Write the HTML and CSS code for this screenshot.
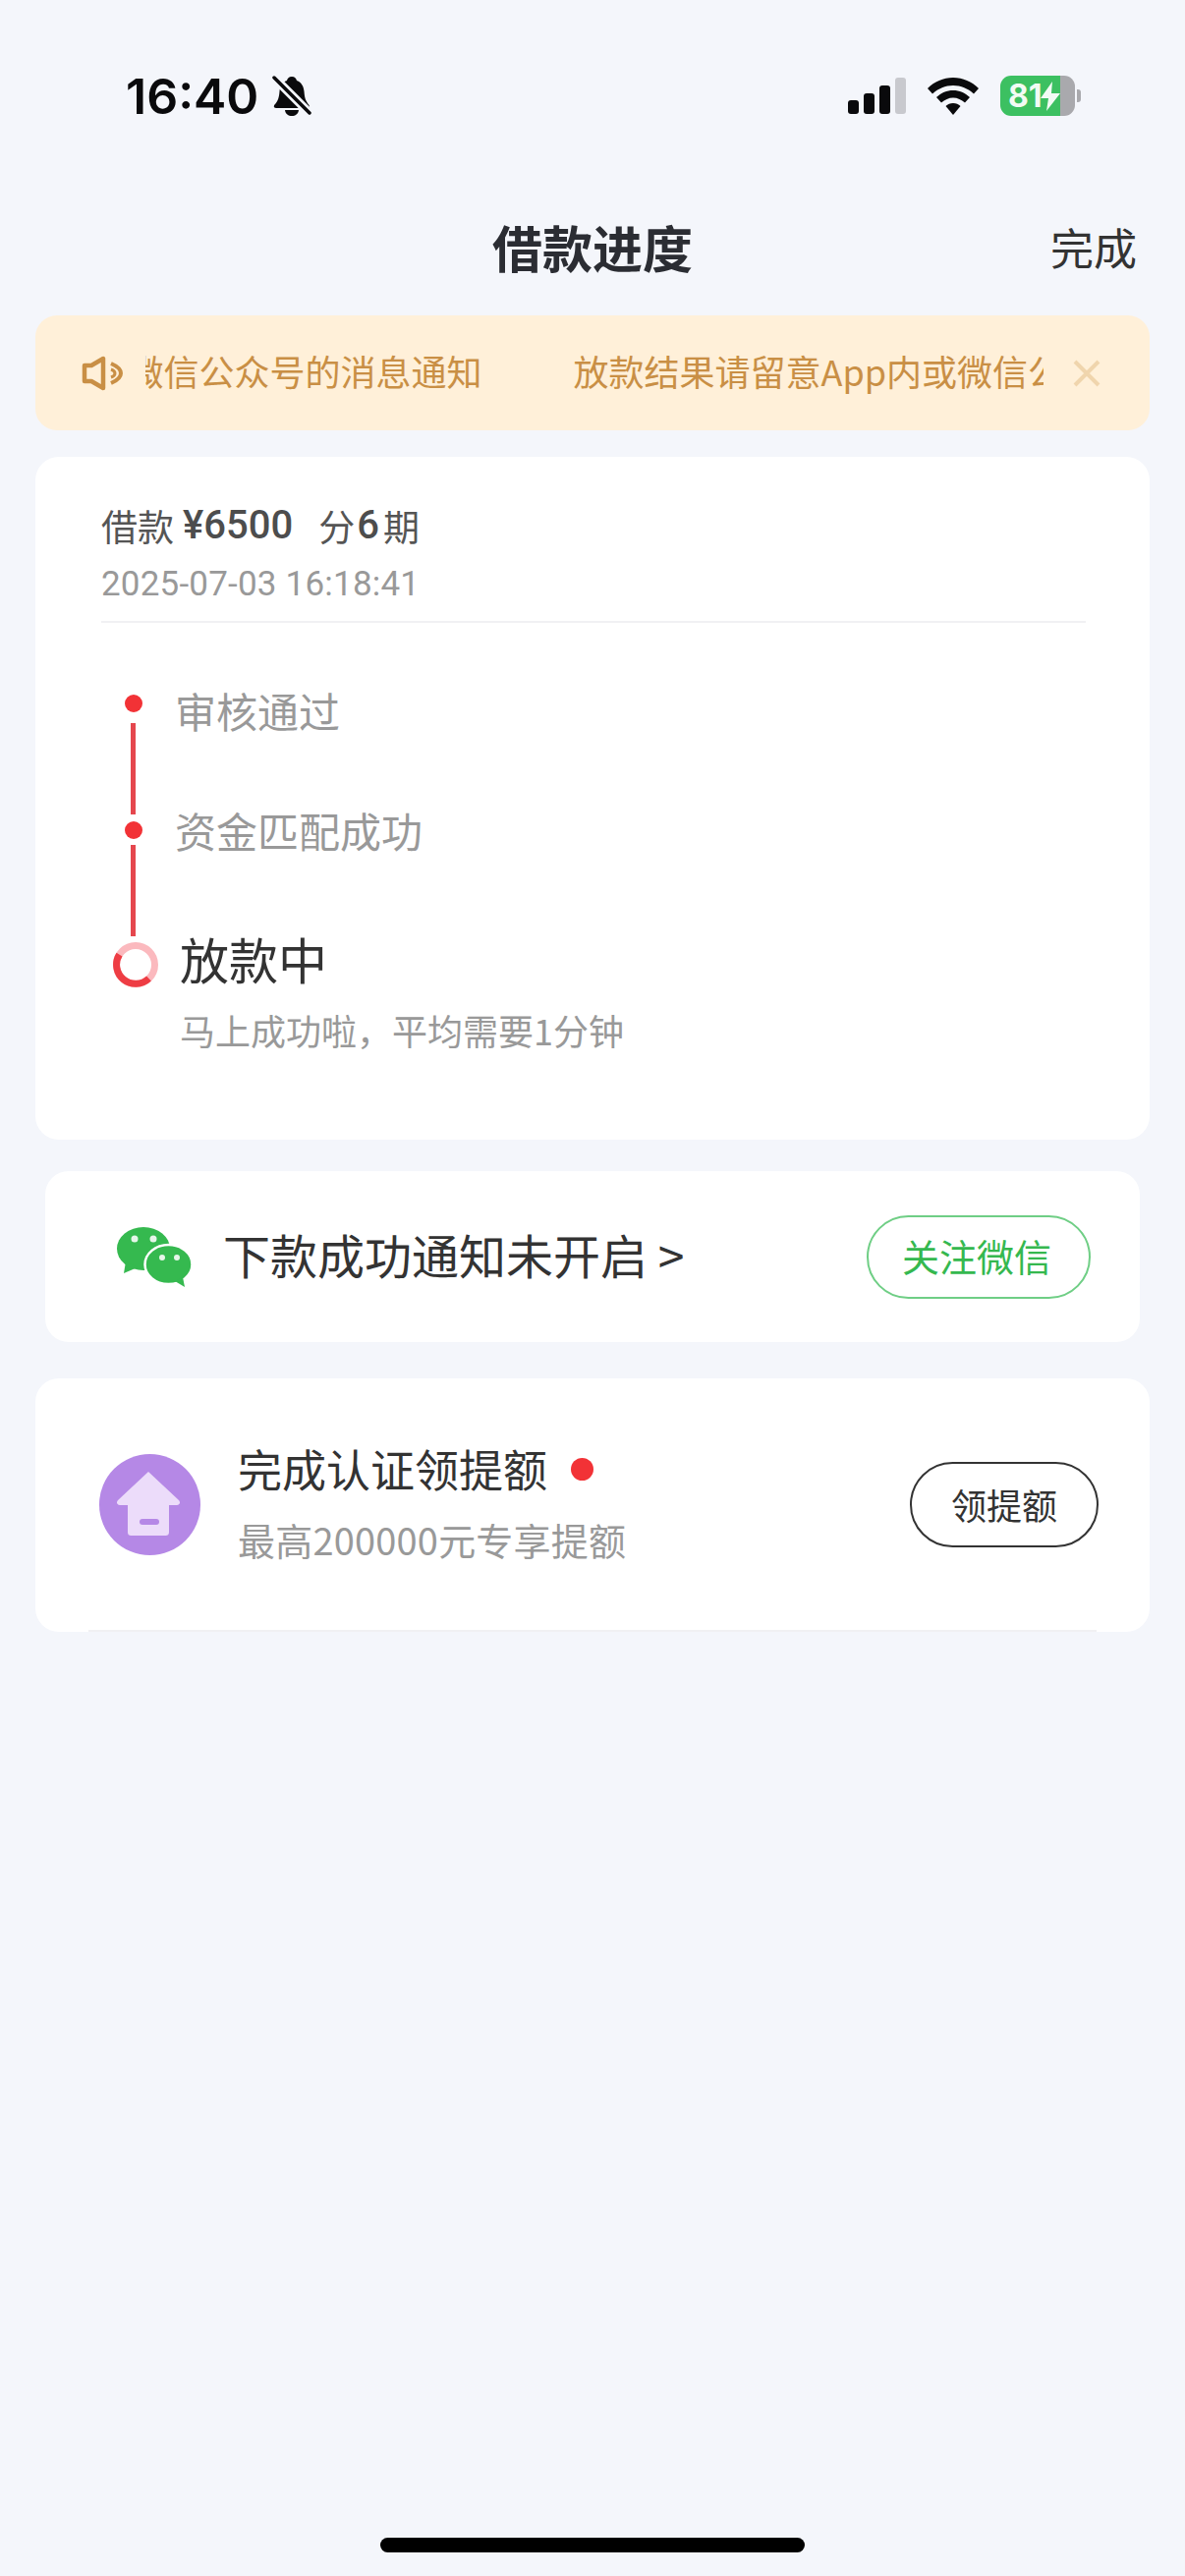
FILE: index.html
```html
<!DOCTYPE html>
<html lang="zh-CN">
<head>
    <meta charset="UTF-8">
    <meta name="viewport" content="width=device-width, initial-scale=1.0">
    <title>借款进度</title>
    <link rel="stylesheet" href="styles.css">
</head>
<body>
    <div class="page">
        <div class="status-bar">
            <div class="status-left">
                <span class="time">16:40</span>
                <svg class="bell" width="40" height="42" viewBox="0 0 40 42">
                    <path d="M20 1c3 0 4.500 2 5 4 5 2 7 6 7.500 11 .5 6 1 9 5 14 1 2 0 3-2 3H5c-3 0-4-1-2.500-3.500C6 26 7 22 7.500 16 8 11 10 7 15 5c.5-2 2-4 5-4z" fill="#0a0a0c"/>
                    <path d="M13 35h14c-.5 4-3.500 6-7 6s-6.500-2-7-6z" fill="#0a0a0c"/>
                    <path d="M1 1l38 38" stroke="#f4f6fb" stroke-width="9"/>
                    <path d="M2 2l36 36" stroke="#0a0a0c" stroke-width="3.500" stroke-linecap="round"/>
                </svg>
            </div>
            <div class="status-right">
                <div class="signal">
                    <span class="bar bar-1"></span>
                    <span class="bar bar-2"></span>
                    <span class="bar bar-3"></span>
                    <span class="bar bar-4"></span>
                </div>
                <svg class="wifi" width="52" height="38" viewBox="0 0 52 38">
                    <path d="M26 0c10 0 19 4 26 11l-5 5.500C41 11 34 8 26 8S11 11 5 16.500L0 11C7 4 16 0 26 0z" fill="#0a0a0c"/>
                    <path d="M26 13c6.500 0 12 2.500 17 7l-5 5.500c-3.500-3-7.500-5-12-5s-8.500 2-12 5L9 20c5-4.500 10.500-7 17-7z" fill="#0a0a0c"/>
                    <path d="M26 26c3 0 5.500 1 7.500 3L26 38l-7.500-9c2-2 4.500-3 7.500-3z" fill="#0a0a0c"/>
                </svg>
                <div class="battery">
                    <div class="battery-body">
                        <span class="battery-level">81</span>
                        <svg class="bolt" width="20" height="30" viewBox="0 0 20 30">
                            <path d="M12 0L0 17h8l-2 13 14-18h-9z" fill="#f2fbf4"/>
                        </svg>
                    </div>
                    <span class="battery-nub"></span>
                </div>
            </div>
        </div>

        <div class="nav-bar">
            <h1 class="nav-title">借款进度</h1>
            <span class="nav-done">完成</span>
        </div>

        <div class="notice">
            <svg class="notice-icon" width="42" height="36" viewBox="0 0 42 36">
                <path d="M3 10h7l12-7v30l-12-7H3z" fill="none" stroke="#c98f45" stroke-width="4.500" stroke-linejoin="round"/>
                <path d="M30 8c7 3 10 7 10 10s-3 7-10 10" fill="none" stroke="#c98f45" stroke-width="4"/>
                <path d="M30 14c3 1 4 3 4 4s-1 3-4 4" fill="none" stroke="#c98f45" stroke-width="3"/>
            </svg>
            <div class="notice-clip">
                <div class="notice-track">
                    <span>放款结果请留意App内或微信公众号的消息通知</span>
                    <span>放款结果请留意App内或微信公众号的消息通知</span>
                </div>
            </div>
            <svg class="notice-close" width="28" height="28" viewBox="0 0 28 28">
                <path d="M2 2l24 24M26 2L2 26" stroke="#f0d5ad" stroke-width="4"/>
            </svg>
        </div>

        <div class="card progress-card">
            <div class="loan-head">
                <div class="loan-title">
                    <span>借款</span>
                    <span class="loan-num amount">¥6500</span>
                    <span>分</span>
                    <span class="loan-num term">6</span>
                    <span>期</span>
                </div>
                <div class="loan-date">2025-07-03 16:18:41</div>
            </div>
            <div class="timeline">
                <div class="rail">
                    <span class="dot"></span>
                    <span class="rail-line"></span>
                    <span class="dot"></span>
                    <span class="rail-line rail-line-last"></span>
                    <svg class="ring" width="46" height="46" viewBox="0 0 46 46">
                        <circle cx="23" cy="23" r="19.500" fill="none" stroke="#fbb9be" stroke-width="7"/>
                        <path d="M6.500 12.600A19.500 19.500 0 0 0 36.500 37" fill="none" stroke="#ee3d44" stroke-width="7"/>
                    </svg>
                </div>
                <div class="steps">
                    <div class="step">审核通过</div>
                    <div class="step">资金匹配成功</div>
                    <div class="step-current">放款中</div>
                    <div class="step-note">马上成功啦，平均需要1分钟</div>
                </div>
            </div>
        </div>

        <div class="card wechat-card">
            <svg class="wechat-icon" width="78" height="62" viewBox="0 0 78 62">
                <ellipse cx="28" cy="23" rx="27" ry="22" fill="#35b94f"/>
                <path d="M10 36l-2 12 14-6z" fill="#35b94f"/>
                <ellipse cx="53.500" cy="39" rx="24" ry="20" fill="#35b94f" stroke="#fff" stroke-width="2.500"/>
                <path d="M60 56l10 6-2-10z" fill="#35b94f"/>
                <circle cx="19" cy="13" r="3.500" fill="#e6f6e9"/>
                <circle cx="38" cy="13" r="3.500" fill="#e6f6e9"/>
                <circle cx="47" cy="32" r="3" fill="#e6f6e9"/>
                <circle cx="62" cy="32" r="3" fill="#e6f6e9"/>
            </svg>
            <div class="wechat-text">下款成功通知未开启 &gt;</div>
            <div class="pill pill-green">关注微信</div>
        </div>

        <div class="card limit-card">
            <div class="limit-row">
                <svg class="limit-icon" width="103" height="103" viewBox="0 0 103 103">
                    <circle cx="51.500" cy="51.500" r="51.500" fill="#b588e6"/>
                    <path d="M50 18L81 47c2 2 1 5-2 5h-8v27c0 3-1 4-4 4H33c-3 0-4-1-4-4V52h-8c-3 0-4-3-2-5z" fill="#ecdcfa"/>
                    <rect x="41" y="66" width="20" height="6" rx="3" fill="#b588e6"/>
                </svg>
                <div class="limit-text">
                    <div class="limit-title">完成认证领提额<span class="red-dot"></span></div>
                    <div class="limit-sub">最高200000元专享提额</div>
                </div>
                <div class="pill pill-dark">领提额</div>
            </div>
            <div class="limit-divider"></div>
        </div>

        <div class="home-indicator"></div>
    </div>
</body>
</html>
```

FILE: styles.css
```css
* {
    box-sizing: border-box;
}
body {
    margin: 0;
    background-color: #f4f6fb;
    font-family: "Noto Sans CJK SC", Roboto, sans-serif;
    color: #333;
}
.page {
    width: 1206px;
    height: 2622px;
    display: flex;
    flex-direction: column;
}

/* status bar */
.status-bar {
    height: 128px;
    padding: 70px 106px 0 128px;
    display: flex;
    justify-content: space-between;
    align-items: flex-start;
}
.status-left {
    display: flex;
    align-items: center;
    gap: 14px;
}
.time {
    font-family: Inter, sans-serif;
    font-size: 50px;
    line-height: 56px;
    font-weight: 600;
    color: #0a0a0c;
}
.status-right {
    display: flex;
    align-items: center;
    margin-top: 7px;
}
.signal {
    display: flex;
    align-items: flex-end;
    gap: 5px;
    height: 37px;
    margin-right: 22px;
}
.bar {
    width: 11px;
    border-radius: 3px;
    background-color: #0a0a0c;
}
.bar-1 { height: 14px; }
.bar-2 { height: 21px; }
.bar-3 { height: 29px; }
.bar-4 { height: 37px; background-color: #c8c9ce; }
.wifi {
    margin-right: 22px;
}
.battery {
    display: flex;
    align-items: center;
    gap: 2px;
}
.battery-body {
    width: 76px;
    height: 41px;
    border-radius: 11px;
    padding-left: 8px;
    display: flex;
    align-items: center;
    background: linear-gradient(to right, #3cc061 61px, #a9a9ad 61px);
}
.battery-level {
    font-family: Inter, sans-serif;
    font-size: 32px;
    font-weight: 700;
    color: #f2fbf4;
}
.bolt {
    margin-left: -2px;
}
.battery-nub {
    width: 4px;
    height: 13px;
    border-radius: 0 3px 3px 0;
    background-color: #a9a9ad;
}

/* nav */
.nav-bar {
    position: relative;
    height: 193px;
    padding-top: 88px;
    text-align: center;
}
.nav-title {
    margin: 0;
    font-size: 51px;
    line-height: 70px;
    font-weight: 700;
    color: #2b2d33;
}
.nav-done {
    position: absolute;
    right: 49px;
    top: 92px;
    font-size: 44px;
    line-height: 62px;
    color: #333;
}

/* notice */
.notice {
    margin: 0 36px;
    height: 117px;
    flex: none;
    padding-left: 47px;
    display: flex;
    align-items: center;
    background-color: #fff0d9;
    border-radius: 22px;
}
.notice-icon {
    flex: none;
    margin-right: 23px;
}
.notice-clip {
    width: 914px;
    overflow: hidden;
    flex: none;
    margin-bottom: 5px;
}
.notice-track {
    display: flex;
    gap: 93px;
    margin-left: -408px;
    white-space: nowrap;
    font-size: 36px;
    line-height: 50px;
    color: #c98f45;
}
.notice-close {
    flex: none;
    margin-left: 30px;
}

/* cards */
.card {
    background-color: #fff;
    border-radius: 24px;
    flex: none;
}
.progress-card {
    margin: 27px 36px 0;
    height: 695px;
    padding: 0 65px 0 67px;
}
.loan-head {
    height: 169px;
    padding-top: 45px;
    border-bottom: 2px solid #f1f1f3;
}
.loan-title {
    display: flex;
    align-items: center;
    font-size: 37px;
    line-height: 50px;
    color: #555;
}
.loan-num {
    font-family: Roboto, sans-serif;
    font-weight: 500;
    font-size: 40px;
    color: #4d4d4d;
}
.amount {
    margin: 0 26px 0 9px;
}
.term {
    margin: 0 4px 0 2px;
}
.loan-date {
    font-family: Roboto, sans-serif;
    font-size: 35px;
    letter-spacing: 0.2px;
    line-height: 44px;
    margin-top: 13px;
    color: #999;
}
.timeline {
    display: flex;
    padding-top: 72px;
}
.rail {
    width: 77px;
    flex: none;
    display: flex;
    flex-direction: column;
    align-items: center;
    margin-left: -6px;
}
.dot {
    width: 18px;
    height: 18px;
    border-radius: 50%;
    flex: none;
    background-color: #f23236;
    margin-top: 1px;
}
.rail-line {
    width: 5px;
    height: 93px;
    flex: none;
    margin: 11px 0 6px;
    background-color: #e5474e;
}
.rail-line-last {
    margin-top: 6px;
}
.ring {
    flex: none;
    margin-left: 4px;
}
.steps {
    flex: 1;
    padding-left: 4px;
}
.step {
    font-size: 42px;
    line-height: 58px;
    margin-top: -12px;
    margin-bottom: 76px;
    color: #999;
}
.step + .step {
    margin-bottom: 67px;
}
.step-current {
    font-size: 50px;
    line-height: 68px;
    padding-left: 5px;
    color: #333;
}
.step-note {
    font-size: 36px;
    line-height: 50px;
    margin-top: 14px;
    padding-left: 5px;
    color: #999;
}
.wechat-card {
    margin: 32px 46px 0;
    height: 174px;
    padding: 0 50px 0 72px;
    display: flex;
    align-items: center;
}
.wechat-icon {
    flex: none;
    margin-right: 31px;
}
.wechat-text {
    flex: 1;
    font-size: 48px;
    line-height: 66px;
    padding-bottom: 6px;
    color: #333;
}
.pill {
    flex: none;
    display: flex;
    align-items: center;
    justify-content: center;
    border-radius: 44px;
}
.pill-green {
    width: 228px;
    height: 85px;
    padding: 0 4px 4px 0;
    font-size: 38px;
    color: #35b84f;
    border: 2px solid #6fce85;
}
.limit-card {
    margin: 37px 36px 0;
    height: 258px;
    display: flex;
    flex-direction: column;
}
.limit-row {
    flex: 1;
    padding: 0 52px 0 65px;
    display: flex;
    align-items: center;
}
.limit-divider {
    flex: none;
    height: 2px;
    margin: 0 54px;
    background-color: #f1f1f3;
}
.limit-icon {
    flex: none;
    margin-right: 38px;
}
.limit-text {
    flex: 1;
    margin-bottom: 5px;
}
.limit-title {
    display: flex;
    align-items: center;
    font-size: 45px;
    line-height: 62px;
    color: #333;
}
.red-dot {
    width: 23px;
    height: 23px;
    border-radius: 50%;
    margin-left: 24px;
    background-color: #f23236;
}
.limit-sub {
    font-size: 38px;
    letter-spacing: 0.2px;
    line-height: 52px;
    margin-top: 15px;
    color: #999;
}
.pill-dark {
    width: 192px;
    height: 87px;
    font-size: 36px;
    color: #333;
    border: 2px solid #333;
}

.home-indicator {
    width: 432px;
    height: 15px;
    margin: auto auto 24px;
    border-radius: 8px;
    background-color: #000;
}
```
